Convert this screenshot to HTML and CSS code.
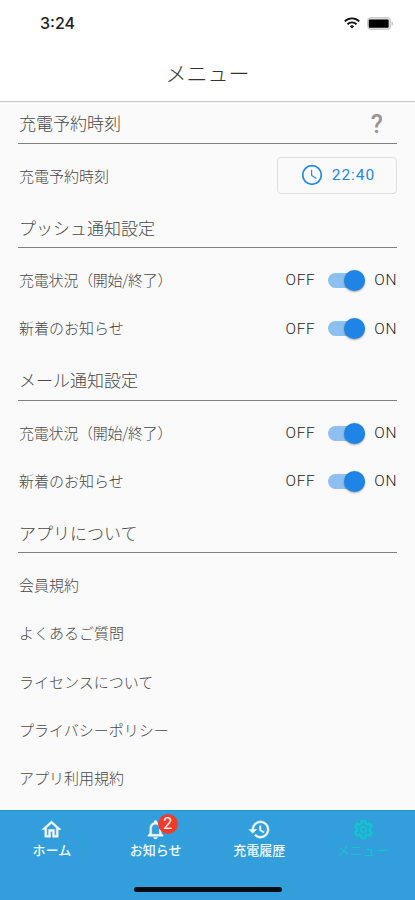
FILE: index.html
```html
<!DOCTYPE html>
<html lang="ja">
<head>
  <meta charset="UTF-8" />
  <meta name="viewport" content="width=device-width, initial-scale=1.0"/>
  <title>メニュー</title>
  <link rel="stylesheet" href="styles.css">
</head>
<body>
  <div class="status-bar">
    <span class="time">3:24</span>
    <div class="status-icons">
      <svg class="wifi" viewBox="0 0 16 12" width="16" height="12" fill="none" stroke="#111" stroke-width="1.9">
        <path d="M.8 4.4a10.2 10.2 0 0 1 14.4 0"/>
        <path d="M3.5 7.2a6.4 6.4 0 0 1 9 0"/>
        <path d="M8 11.6 5.9 9.4a3 3 0 0 1 4.2 0z" fill="#111" stroke="none"/>
      </svg>
      <svg class="battery" viewBox="0 0 27 13" width="27" height="13">
        <rect x=".6" y=".6" width="23" height="11.8" rx="3.2" fill="#ddd" stroke="#c8c8c8"/>
        <rect x="1.8" y="2.4" width="19.8" height="8.4" rx="1" fill="#000"/>
        <path d="M24.6 4.2c1.9.8 1.9 3.8 0 4.6z" fill="#bbb"/>
      </svg>
    </div>
  </div>

  <header class="header">
    <h1>メニュー</h1>
  </header>

  <main class="content">
    <section>
      <div class="section-title first">
        <h2>充電予約時刻</h2>
        <span class="help">?</span>
      </div>
      <div class="rows">
        <div class="row">
          <span>充電予約時刻</span>
          <button class="time-btn">
            <svg viewBox="0 0 22 22" width="22" height="22" fill="none" stroke="#2389e8" stroke-width="1.7">
              <circle cx="11" cy="11" r="9.3"/>
              <path d="M10.6 5.8v5.6l4.8 3" stroke-width="1.2"/>
            </svg>
            <span>22:40</span>
          </button>
        </div>
      </div>
    </section>

    <section>
      <div class="section-title"><h2>プッシュ通知設定</h2></div>
      <div class="rows">
        <div class="row">
          <span class="charge">充電状況（開始/終了）</span>
          <div class="toggle"><span>OFF</span><i class="switch"></i><span>ON</span></div>
        </div>
        <div class="row">
          <span>新着のお知らせ</span>
          <div class="toggle"><span>OFF</span><i class="switch"></i><span>ON</span></div>
        </div>
      </div>
    </section>

    <section>
      <div class="section-title"><h2>メール通知設定</h2></div>
      <div class="rows">
        <div class="row">
          <span class="charge">充電状況（開始/終了）</span>
          <div class="toggle"><span>OFF</span><i class="switch"></i><span>ON</span></div>
        </div>
        <div class="row">
          <span>新着のお知らせ</span>
          <div class="toggle"><span>OFF</span><i class="switch"></i><span>ON</span></div>
        </div>
      </div>
    </section>

    <section>
      <div class="section-title"><h2>アプリについて</h2></div>
      <div class="rows">
        <div class="row">会員規約</div>
        <div class="row">よくあるご質問</div>
        <div class="row">ライセンスについて</div>
        <div class="row">プライバシーポリシー</div>
        <div class="row">アプリ利用規約</div>
      </div>
    </section>
  </main>

  <nav class="tab-bar">
    <div class="tabs">
      <a class="tab">
        <svg viewBox="0 0 24 24" width="23" height="23" fill="currentColor">
          <path d="M12 5.69l5 4.5V18h-2v-6H9v6H7v-7.81l5-4.5M12 3L2 12h3v8h6v-6h2v6h6v-8h3L12 3z" stroke="currentColor" stroke-width=".5"/>
        </svg>
        <span>ホーム</span>
      </a>
      <a class="tab">
        <svg viewBox="0 0 24 24" width="23" height="23" fill="currentColor">
          <path d="M12 22c1.1 0 2-.9 2-2h-4c0 1.1.9 2 2 2zm6-6v-5c0-3.07-1.63-5.64-4.5-6.32V4c0-.83-.67-1.5-1.5-1.5s-1.5.67-1.5 1.5v.68C7.64 5.36 6 7.92 6 11v5l-2 2v1h16v-1l-2-2zm-2 1H8v-6c0-2.48 1.51-4.5 4-4.5s4 2.02 4 4.5v6z" stroke="currentColor" stroke-width=".4"/>
        </svg>
        <b class="badge">2</b>
        <span>お知らせ</span>
      </a>
      <a class="tab">
        <svg viewBox="0 0 24 24" width="23" height="23" fill="currentColor">
          <path d="M13 3a9 9 0 0 0-9 9H1l3.89 3.89.07.14L9 12H6c0-3.87 3.13-7 7-7s7 3.13 7 7-3.13 7-7 7c-1.93 0-3.68-.79-4.94-2.06l-1.42 1.42A8.95 8.95 0 0 0 13 21a9 9 0 0 0 0-18zm-1 5v5l4.28 2.54.72-1.21-3.5-2.08V8H12z" stroke="currentColor" stroke-width=".5"/>
        </svg>
        <span>充電履歴</span>
      </a>
      <a class="tab active">
        <svg viewBox="0 0 24 24" width="23" height="23" fill="none" stroke="currentColor" stroke-width="2.6" stroke-linejoin="round">
          <path d="M10.2 3h3.6l.5 2.7 1.9 1.1 2.6-.9 1.8 3.1-2.1 1.8v2.4l2.1 1.8-1.8 3.1-2.6-.9-1.9 1.1-.5 2.7h-3.6l-.5-2.7-1.9-1.1-2.6.9L3.4 15l2.1-1.8v-2.4L3.4 9l1.8-3.1 2.6.9 1.9-1.1z"/>
          <circle cx="12" cy="12" r="2.8" stroke-width="2"/>
        </svg>
        <span>メニュー</span>
      </a>
    </div>
    <div class="home-indicator"></div>
  </nav>
</body>
</html>
```
FILE: styles.css
```css
:root {
  --bar: #329fdc;
  --blue: #1e84e6;
  --text: #484848;
}
* {
  box-sizing: border-box;
}
body {
  margin: 0;
  height: 900px;
  display: flex;
  flex-direction: column;
  overflow: hidden;
  background: #fafafa;
  color: var(--text);
  font-family: "Noto Sans CJK JP", sans-serif;
  font-size: 15px;
  font-weight: 300;
}
h1, h2 {
  margin: 0;
  font-weight: 300;
}
.status-bar {
  height: 46px;
  flex: none;
  display: flex;
  justify-content: space-between;
  align-items: center;
  padding: 0 21px 0 40px;
  background: #fff;
}
.time {
  font-family: Inter, sans-serif;
  font-size: 16px;
  font-weight: 500;
  color: #222;
}
.status-icons {
  display: flex;
  align-items: center;
  gap: 7px;
}
.header {
  height: 55px;
  flex: none;
  display: flex;
  justify-content: center;
  align-items: center;
  padding-bottom: 4px;
  background: #fff;
  box-shadow: 0 1px 1px rgba(0,0,0,0.2);
}
.header h1 {
  font-size: 21px;
  color: #333;
}
.content {
  flex: 1;
  min-height: 0;
  padding: 0 18px;
}
.section-title {
  height: 48px;
  display: flex;
  justify-content: space-between;
  align-items: center;
  padding: 7px 1px 0;
  border-bottom: 1px solid #808080;
}
.section-title.first {
  height: 43px;
  padding-top: 1px;
}
.section-title h2 {
  font-size: 17px;
}
.help {
  font-family: Roboto, sans-serif;
  font-size: 25px;
  font-weight: 500;
  color: #959595;
  padding: 4px 13px 0 0;
}
.rows {
  padding: 7px 0 1px;
}
.row {
  height: 48.3px;
  display: flex;
  justify-content: space-between;
  align-items: center;
  padding-left: 1px;
}
.charge {
  letter-spacing: -0.25px;
}
.time-btn {
  width: 120px;
  height: 37px;
  display: flex;
  justify-content: center;
  align-items: center;
  gap: 9px;
  padding: 0 0 0 2px;
  border: 1px solid #dedede;
  border-radius: 4px;
  background: #fafafa;
  color: #2389e8;
  font-family: Roboto, sans-serif;
  font-size: 15.5px;
  font-weight: 400;
  letter-spacing: 1px;
}
.toggle {
  display: flex;
  align-items: center;
  padding-top: 2px;
  font-family: Roboto, sans-serif;
  font-size: 15.5px;
  font-weight: 300;
  letter-spacing: 0.6px;
  color: #222;
}
.switch {
  position: relative;
  width: 37px;
  height: 15px;
  margin: 0 9px 0 13px;
  border-radius: 8px;
  background: #8dbff0;
}
.switch::after {
  content: "";
  position: absolute;
  top: -3px;
  right: 0;
  width: 21px;
  height: 21px;
  border-radius: 50%;
  background: var(--blue);
  box-shadow: 0 1px 2px rgba(0,0,0,0.35);
}
.tab-bar {
  height: 90px;
  flex: none;
  display: flex;
  flex-direction: column;
  justify-content: space-between;
  align-items: center;
  padding: 7px 0 8px;
  background: var(--bar);
  border-top: 1px solid #1d96d3;
}
.tabs {
  width: 100%;
  display: grid;
  grid-template-columns: repeat(4, 1fr);
}
.tab {
  position: relative;
  display: flex;
  flex-direction: column;
  align-items: center;
  color: #f2faff;
  font-size: 13px;
  font-weight: 500;
  line-height: 17px;
}
.tab.active {
  color: #11c5cb;
  font-weight: 400;
}
.badge {
  position: absolute;
  top: -4px;
  left: 54px;
  width: 20px;
  height: 20px;
  border-radius: 50%;
  background: #f23a2b;
  color: #fff;
  font-family: Roboto, sans-serif;
  font-size: 16px;
  font-weight: 400;
  line-height: 20px;
  text-align: center;
}
.home-indicator {
  width: 148px;
  height: 5px;
  border-radius: 3px;
  background: #080c14;
}
```
